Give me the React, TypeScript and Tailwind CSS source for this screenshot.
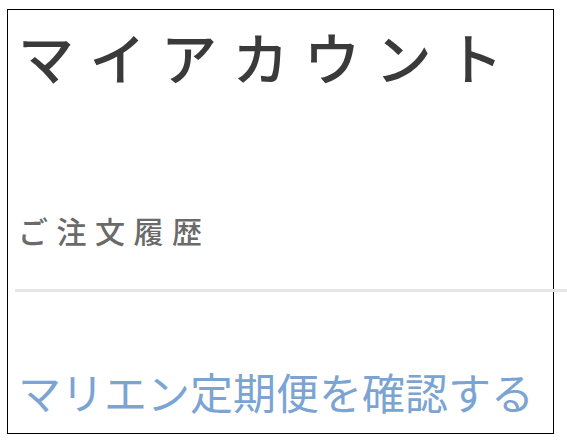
import React from "react";

const JP = "font-['Noto_Sans_CJK_JP','Noto_Sans',sans-serif]";

export default function App() {
  return (
    <div className={`min-h-screen bg-white pl-[7px] pt-[9px] ${JP}`}>
      <div className="w-[547px] h-[425px] border border-black overflow-visible">
        <div className="pl-[10px] pt-[14px]">
          <h1 className="text-[56px] leading-[64px] font-medium tracking-[15.5px] text-[#3a3a3a] whitespace-nowrap">
            マイアカウント
          </h1>
        </div>

        <div className="pl-[10px] mt-[124px]">
          <p className="text-[30px] leading-[36px] font-medium tracking-[8.5px] text-[#6a6a6a] whitespace-nowrap">
            ご注文履歴
          </p>
        </div>

        {/* divider runs past the frame to the window edge */}
        <div className="ml-[7px] mr-[-14px] mt-[41px] h-[3px] bg-[#e6e6e6]" />

        <div className="pl-[10px] mt-[73px]">
          <a className="text-[43px] leading-[52px] text-[#7ba4d2] whitespace-nowrap">
            マリエン定期便を確認する
          </a>
        </div>
      </div>
    </div>
  );
}
